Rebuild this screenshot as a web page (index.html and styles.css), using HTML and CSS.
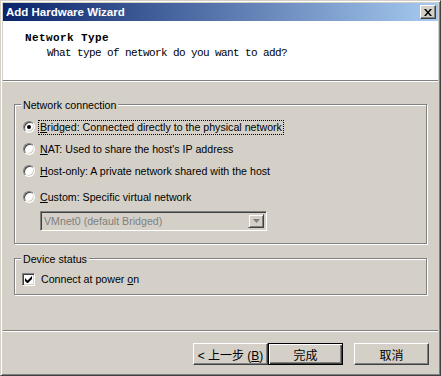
FILE: index.html
```html
<!DOCTYPE html>
<html>
<head>
<meta charset="utf-8">
<link rel="stylesheet" href="styles.css">
</head>
<body>
<div class="window">
  <div class="titlebar">
    <span class="title">Add Hardware Wizard</span>
    <span class="close"><svg width="8" height="7" viewBox="0 0 8 7"><path d="M0 0h2l2 2.5L6 0h2L5 3.5 8 7H6L4 4.5 2 7H0l3-3.5z" fill="#000"/></svg></span>
  </div>
  <div class="header">
    <div class="h-title">Network Type</div>
    <div class="h-sub">What type of network do you want to add?</div>
  </div>
  <div class="body">
    <div class="group net">
      <span class="legend">Network connection</span>
      <div class="row"><span class="radio checked"></span><span class="lbl focus"><u>B</u>ridged: Connected directly to the physical network</span></div>
      <div class="row"><span class="radio"></span><span class="lbl"><u>N</u>AT: Used to share the host's IP address</span></div>
      <div class="row"><span class="radio"></span><span class="lbl"><u>H</u>ost-only: A private network shared with the host</span></div>
      <div class="row custom"><span class="radio"></span><span class="lbl"><u>C</u>ustom: Specific virtual network</span></div>
      <div class="select">
        <span class="sel-text">VMnet0 (default Bridged)</span>
        <span class="sel-btn"><svg width="7" height="4" viewBox="0 0 7 4"><path d="M0 0h7L3.5 4z" fill="#808080"/></svg></span>
      </div>
    </div>
    <div class="group dev">
      <span class="legend">Device status</span>
      <div class="row"><span class="check"><svg width="7" height="7" viewBox="0 0 7 7"><path d="M0 2v3l2 2h1l4-4V0L2.5 4.5z" fill="#000"/></svg></span><span class="lbl">Connect at power <u>o</u>n</span></div>
    </div>
  </div>
  <div class="footer">
    <button class="btn">&lt; 上一步 (<u>B</u>)</button>
    <button class="btn default">完成</button>
    <button class="btn cancel">取消</button>
  </div>
</div>
</body>
</html>
```
FILE: styles.css
```css
html, body { margin: 0; padding: 0; background: #d4d0c8; }
.window {
  width: 441px; height: 376px; box-sizing: border-box;
  background: #d4d0c8;
  border: 1px solid; border-color: #d4d0c8 #404040 #404040 #d4d0c8;
  box-shadow: inset 1px 1px #fff, inset -1px -1px #808080;
  padding: 2px;
  display: flex; flex-direction: column;
  font-family: "Liberation Sans", Arial, sans-serif; font-size: 10.65px; color: #000;
}
.titlebar {
  height: 18px; flex: none;
  background: linear-gradient(to right, #0a246a, #a6caf0);
  display: flex; align-items: center; justify-content: space-between;
  padding: 0 2px 0 3px;
}
.title { color: #fff; font-weight: bold; font-size: 11.5px; }
.close {
  width: 16px; height: 14px; box-sizing: border-box;
  background: #d4d0c8;
  border: 1px solid; border-color: #fff #404040 #404040 #fff;
  box-shadow: inset -1px -1px #808080;
  display: flex; align-items: center; justify-content: center;
  padding-right: 1px;
}
.header {
  height: 60px; flex: none; box-sizing: border-box;
  background: #fff;
  border-bottom: 1px solid #808080;
  box-shadow: 0 1px 0 #fff;
  padding-top: 10px;
  font-family: "Liberation Mono", "DejaVu Sans Mono", monospace; font-size: 11px;
}
.h-title { font-weight: bold; letter-spacing: 0.4px; line-height: 14px; padding-left: 22px; }
.h-sub { line-height: 14px; margin-top: 1px; padding-left: 44px; letter-spacing: -0.6px; }
.body { flex: 1; padding: 23px 11px 0 11px; }
.group {
  position: relative;
  border: 1px solid #808080;
  box-shadow: 1px 1px 0 #fff, inset 1px 1px 0 #fff;
  padding-left: 8px;
}
.net { padding-top: 11px; box-sizing: border-box; height: 140px; }
.dev { margin-top: 14px; height: 37px; box-sizing: border-box; padding-top: 10px; }
.legend {
  position: absolute; top: -7px; left: 6px;
  background: #d4d0c8; padding: 0 2px; line-height: 14px;
}
.row { height: 22px; display: flex; align-items: center; }
.custom { margin-top: 4px; }
.dev .row { height: 20px; }
.radio {
  width: 12px; height: 12px; box-sizing: border-box; flex: none;
  border-radius: 50%;
  background: #fff;
  border: 1px solid; border-color: #808080 #fff #fff #808080;
  box-shadow: inset 1px 1px 0 #404040, inset -1px -1px 0 #d4d0c8;
  position: relative;
}
.radio.checked::after {
  content: ""; position: absolute; left: 3px; top: 3px;
  width: 4px; height: 4px; border-radius: 50%; background: #000;
}
.lbl {
  margin-left: 3px; padding: 0 1px; border: 1px dotted transparent; line-height: 13px;
}
.lbl.focus { border-color: #000; }
.check {
  width: 13px; height: 13px; box-sizing: border-box; flex: none;
  background: #fff;
  border: 1px solid; border-color: #808080 #fff #fff #808080;
  box-shadow: inset 1px 1px 0 #404040, inset -1px -1px 0 #d4d0c8;
  display: flex; align-items: center; justify-content: center;
  margin-left: -1px; margin-right: 1px;
}
.select {
  margin: 3px 0 0 17px; width: 227px; height: 20px; box-sizing: border-box;
  border: 1px solid; border-color: #808080 #fff #fff #808080;
  box-shadow: inset 1px 1px 0 #404040, inset -1px -1px 0 #d4d0c8;
  display: flex; align-items: center; justify-content: space-between;
  padding: 2px;
}
.sel-text { color: #808080; padding-left: 1px; }
.sel-btn {
  width: 16px; height: 14px; box-sizing: border-box;
  background: #d4d0c8;
  border: 1px solid; border-color: #d4d0c8 #404040 #404040 #d4d0c8;
  box-shadow: inset 1px 1px #fff, inset -1px -1px #808080;
  display: flex; align-items: center; justify-content: center;
}
.footer {
  height: 43px; flex: none; box-sizing: border-box;
  border-top: 1px solid #808080;
  box-shadow: inset 0 1px 0 #fff;
  display: flex; align-items: flex-start; justify-content: flex-end;
  padding: 12px 9px 0 0;
}
.btn {
  width: 75px; height: 22px; box-sizing: border-box; margin: 0;
  background: #d4d0c8;
  border: 1px solid; border-color: #fff #404040 #404040 #fff;
  box-shadow: inset -1px -1px #808080;
  font-family: "Liberation Sans", "Noto Sans CJK SC", sans-serif; font-size: 12px; color: #000;
  padding: 0;
}
.btn.default {
  border: 1px solid #000;
  box-shadow: inset 1px 1px #fff, inset -1px -1px #404040, inset -2px -2px #808080;
}
.btn.cancel { margin-left: 11px; }
```
